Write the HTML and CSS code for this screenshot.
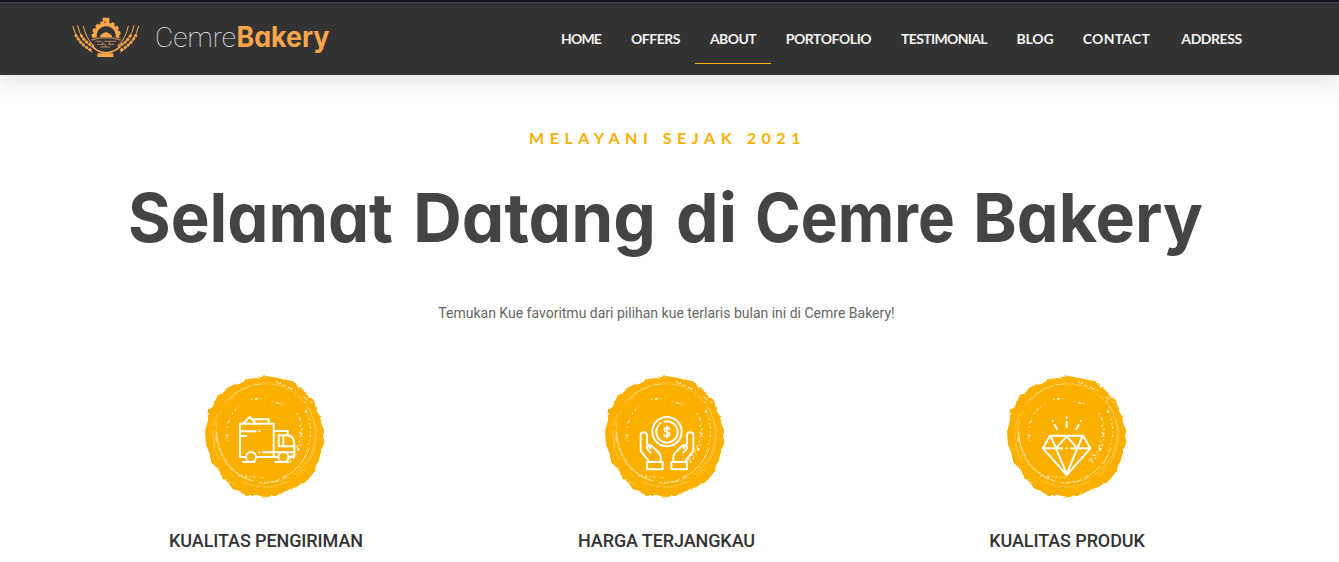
FILE: index.html
```html
<!DOCTYPE html>
<html lang="id">
<head>
<meta charset="utf-8">
<title>Cemre Bakery</title>
<link rel="stylesheet" href="styles.css">
</head>
<body>
<svg class="defs" width="0" height="0" aria-hidden="true">
  <defs>
    <filter id="rough" x="-5%" y="-5%" width="110%" height="110%">
      <feTurbulence type="fractalNoise" baseFrequency="0.09" numOctaves="2" seed="4" result="n"/>
      <feDisplacementMap in="SourceGraphic" in2="n" scale="8" xChannelSelector="R" yChannelSelector="G"/>
    </filter>
    <symbol id="brush" viewBox="0 0 408 405">
      <g filter="url(#rough)">
        <path fill="#fbb003" d="M152 28L180 24 210 18 245 24 292 34 306 50 320 58 336 78 354 90 361 120 372 138 377 165 384 178 382 198 385 218 375 240 374 262 359 288 357 302 335 330 300 352 274 360 250 374 210 382 180 375 150 378 128 362 110 356 94 336 75 320 72 305 45 275 40 248 30 225 27 185 36 150 35 122 50 110 65 76 84 66 100 48 130 42Z"/>
        <g fill="none" stroke="#fff">
          <circle cx="206" cy="196" r="155" stroke-width="1.5" stroke-dasharray="90 12 40 30 140 20 20 60" opacity=".6"/>
          <circle cx="209" cy="190" r="149" stroke-width="1.8" stroke-dasharray="150 10 60 25 8 30" opacity=".5"/>
          <path d="M62 185C64 250 105 315 172 333M190 338C260 342 315 298 340 235" stroke-width="3" stroke-dasharray="42 3 20 5" opacity=".7"/>
          <path d="M95 215C86 160 105 120 142 102M165 88l38-3m24 11l34 5" stroke-width="4" stroke-dasharray="4 8 10 7 2 12" opacity=".8"/>
          <path d="M303 130C325 165 328 225 282 278M312 165C318 205 306 242 272 274" stroke-width="4" stroke-dasharray="5 9 12 7 3 11" opacity=".85"/>
          <path d="M330 120C350 170 347 205 330 245M147 318l55 5" stroke-width="3" stroke-dasharray="7 9 3 6" opacity=".8"/>
          <path d="M90 48l55-15M240 35l60 27M77 324l38 20M322 80l30 22" stroke-width="3" stroke-dasharray="16 7 8 8" opacity=".8"/>
        </g>
      </g>
    </symbol>
  </defs>
</svg>

<header class="header">
  <a class="brand" href="#">
    <svg class="emblem" viewBox="0 0 240 150" aria-hidden="true">
      <g fill="none" stroke="#f9a64a">
        <path stroke-width="11" d="M87 77A34 34 0 1 1 154 77"/>
        <path stroke-width="7" stroke-dasharray="10 7" d="M81 76A40 40 0 1 1 160 76"/>
        <path stroke-width="5" d="M79 104Q119 141 163 104"/>
        <path stroke-width="3" d="M20 42Q32 90 79 121M35 40Q42 83 81 107M52 42Q60 80 83 101M218 42Q207 90 163 121M204 40Q196 83 158 107M187 42Q179 80 156 101"/>
        <path stroke-width="8" stroke-dasharray="9 3" d="M28 67Q43 98 78 116M44 68Q59 94 84 103M211 67Q196 98 162 116M195 68Q181 94 156 103"/>
      </g>
      <path fill="#f9a64a" d="M110 17h20v12h-20zM94 124h48v11H94zM102 76Q101 68 108 66 119 56 130 65 139 68 138 76Z"/>
      <g fill="none" stroke="#b98058">
        <path stroke-width="4" d="M77 84Q119 70 164 84"/>
        <path stroke-width="3" d="M88 88h18m9 0h36M94 97h24m8 0h19M103 105h30M110 88v9m20-9v9m-11 0v8"/>
      </g>
    </svg>
    <svg class="wordmark" viewBox="0 0 180 40" role="img">
      <text class="thin" x="0" y="28" textLength="81" lengthAdjust="spacingAndGlyphs">Cemre</text>
      <text class="heavy" x="81.5" y="28" textLength="93" lengthAdjust="spacingAndGlyphs">Bakery</text>
    </svg>
  </a>
  <nav class="nav">
    <a class="w-home" href="#">HOME</a>
    <a class="w-offers" href="#">OFFERS</a>
    <a class="w-about active" href="#">ABOUT</a>
    <a class="w-porto" href="#">PORTOFOLIO</a>
    <a class="w-testi" href="#">TESTIMONIAL</a>
    <a class="w-blog" href="#">BLOG</a>
    <a class="w-contact" href="#">CONTACT</a>
    <a class="w-address" href="#">ADDRESS</a>
  </nav>
</header>

<main class="about">
  <p class="eyebrow">MELAYANI SEJAK 2021</p>
  <h1 class="title">
    <svg viewBox="0 0 1100 90">
      <text x="7" y="68" textLength="265" lengthAdjust="spacingAndGlyphs">Selamat</text>
      <text x="292" y="68" textLength="243" lengthAdjust="spacingAndGlyphs">Datang</text>
      <text x="555" y="68" textLength="61" lengthAdjust="spacingAndGlyphs">di</text>
      <text x="634" y="68" textLength="200" lengthAdjust="spacingAndGlyphs">Cemre</text>
      <text x="852" y="68" textLength="230" lengthAdjust="spacingAndGlyphs">Bakery</text>
    </svg>
  </h1>
  <p class="lead">Temukan Kue favoritmu dari pilihan kue terlaris bulan ini di Cemre Bakery!</p>

  <section class="features">
    <article class="feature">
      <svg class="badge" viewBox="0 0 408 405" aria-hidden="true">
        <use href="#brush"/>
        <g fill="none" stroke="#fff" stroke-width="6" stroke-linejoin="round" stroke-linecap="round" transform="translate(-3 0)">
          <path d="M152 261H135V161H236V261H184M146 159l18-18 18 18M170 148h51v12M236 183h42v11M236 261h11M281 261h17v-40q0-25-26-25h-21v33h47M265 197v31M204 247h91M144 276h35M242 276h37"/>
          <path d="M137 184h45M137 198h17M193 184h1M193 247h1"/>
          <circle cx="168" cy="261" r="15"/><circle cx="265" cy="261" r="15"/>
        </g>
      </svg>
      <h2>KUALITAS PENGIRIMAN</h2>
    </article>
    <article class="feature">
      <svg class="badge" viewBox="0 0 408 405" aria-hidden="true">
        <use href="#brush"/>
        <g fill="none" stroke="#fff" stroke-width="6" stroke-linejoin="round" stroke-linecap="round">
          <circle cx="213" cy="185" r="44"/>
          <path d="M205 155A32 32 0 1 1 188 166M193 160h1"/>
          <path stroke-width="5" d="M213 168v35M221 177q-3-5-9-4-8 1-7 7 1 5 8 6 8 1 8 7-1 6-9 6-7 0-9-5"/>
          <path d="M157 271l-22-27q-1-4-1-12v-37q0-8 9-8t10 8v26l11 14M164 248l-10-11q-4-6 2-10 7-4 13 2l20 20q5 5 5 13v9M153 276h47v22h-47z"/>
          <path d="M269 271l22-27q1-4 1-12v-37q0-8-9-8t-10 8v26l-11 14M262 248l10-11q4-6-2-10-7-4-13 2l-20 20q-5 5-5 13v9M273 276h-47v22h47z"/>
        </g>
      </svg>
      <h2>HARGA TERJANGKAU</h2>
    </article>
    <article class="feature last">
      <svg class="badge" viewBox="0 0 408 405" aria-hidden="true">
        <use href="#brush"/>
        <g fill="none" stroke="#fff" stroke-width="6" stroke-linejoin="round" stroke-linecap="round">
          <path d="M156 197H255L277 235 206 315 135 235ZM135 235h57M219 235h58M158 198l16 37 32 77 32-77 16-37M176 232l30-33 30 33M205 235h1"/>
          <path d="M206 142v1M206 155v17M164 152v1M170 165l7 12M249 152v1M242 165l-7 12"/>
        </g>
      </svg>
      <h2>KUALITAS PRODUK</h2>
    </article>
  </section>
</main>
</body>
</html>
```

FILE: styles.css
```css
* { box-sizing: border-box; }

body {
  margin: 0;
  height: 562px;
  overflow: hidden;
  background: #fff;
  color: #333;
  font-family: Roboto, "Liberation Sans", sans-serif;
}

.defs { position: absolute; }

.header {
  display: flex;
  justify-content: space-between;
  height: 75px;
  padding: 9px 82px 0 66px;
  background: linear-gradient(#15171f 0 2px, #434354 2px 3px, #333 3px);
  box-shadow: 0 0 25px 4px rgba(0, 0, 0, 0.15);
}

.brand {
  display: flex;
  gap: 9px;
  text-decoration: none;
}

.emblem { width: 80px; height: 50px; margin-top: 3px; }
.wordmark { width: 180px; height: 40px; margin-top: 10px; }
.wordmark text { font-size: 28px; }
.thin { font-family: Roboto, sans-serif; font-weight: 100; fill: #e8e8e8; }
.heavy { font-family: Inter, sans-serif; font-weight: 700; font-feature-settings: "cv11"; fill: #f9a64a; }

.nav { display: flex; }

.nav a {
  display: flex;
  justify-content: center;
  height: 55px;
  padding-top: 20px;
  color: #f1f1f1;
  font: 700 14px/20px Lato, sans-serif;
  letter-spacing: -0.45px;
  text-decoration: none;
  border-bottom: 1px solid transparent;
}

.nav .active { border-bottom-color: #f9b000; }
.nav .w-home { width: 70px; letter-spacing: -0.8px; }
.nav .w-offers { width: 79px; }
.nav .w-about { width: 76px; letter-spacing: -0.6px; }
.nav .w-porto { width: 115px; }
.nav .w-testi { width: 116px; letter-spacing: -0.65px; }
.nav .w-blog { width: 66px; letter-spacing: -0.2px; }
.nav .w-contact { width: 98px; letter-spacing: 0.25px; padding-right: 1px; }
.nav .w-address { width: 91px; }

.about {
  display: flex;
  flex-direction: column;
  align-items: center;
  padding-top: 51px;
}

.eyebrow {
  margin: 0 4px 0 0;
  color: #fbb003;
  font: 700 16px/24px Lato, sans-serif;
  letter-spacing: 5.55px;
}

.title { margin: 24px 0 0; height: 90px; }
.title svg { display: block; width: 1100px; height: 90px; margin-left: 2px; }
.title text {
  font-family: Inter, sans-serif;
  font-size: 68px;
  font-weight: 700;
  font-feature-settings: "cv11";
  fill: #444;
}

.lead {
  margin: 39px 6px 0 0;
  color: #666;
  font-size: 14px;
  line-height: 20px;
}

.features {
  display: grid;
  grid-template-columns: repeat(3, 400.5px);
  margin-top: 47px;
  margin-left: -6px;
}

.feature {
  display: flex;
  flex-direction: column;
  align-items: center;
}

.badge { width: 136px; height: 135px; margin-left: -5px; }
.last .badge { margin-left: -2px; }

.feature h2 {
  margin: 23px 0 0;
  font-size: 18px;
  font-weight: 500;
  line-height: 25px;
  letter-spacing: -0.1px;
}
```
